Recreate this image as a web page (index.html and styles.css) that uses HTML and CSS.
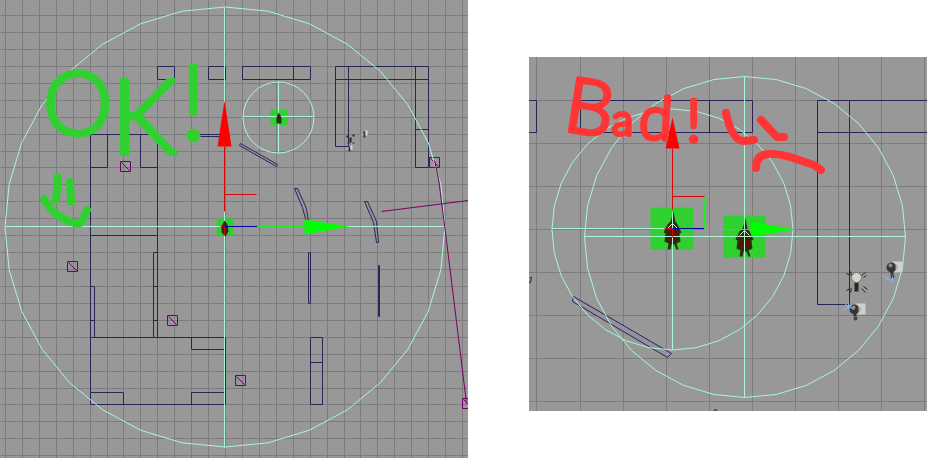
FILE: index.html
```
<!DOCTYPE html>
<html lang="en">
<head>
<meta charset="utf-8">
<title>Light radius comparison</title>
<link rel="stylesheet" href="styles.css">
</head>
<body>
<main class="compare">
<svg class="view" viewBox="0 0 468 458" role="img" aria-label="Viewport with correct radii">
  <defs>
    <polygon id="ring" points="0,-1000 195,-981 383,-924 556,-831 707,-707 831,-556 924,-383 981,-195 1000,0 981,195 924,383 831,556 707,707 556,831 383,924 195,981 0,1000 -195,981 -383,924 -556,831 -707,707 -831,556 -924,383 -981,195 -1000,0 -981,-195 -924,-383 -831,-556 -707,-707 -556,-831 -383,-924 -195,-981"/>
    <g id="node"><path d="M0 0h10v10h-10zM1 1L9 9"/></g>
    <g id="person">
      <path fill="#302b10" d="M1-20L-2-10-5-7-9 1-7 2-8 10-4 12-5 18-2 18-1 13 2 13 4 18 6 18 4 12 8 10 7 2 9 1 5-7 3-10z"/>
      <path fill="#541800" d="M-4-3h8l2 12h-12z"/>
      <path fill="none" stroke="#e0eebc" d="M-5-3L0-8 5-3"/>
    </g>
    <g id="spot">
      <path fill="#cfcfcf" d="M1-6h10v11H1z"/>
      <circle r="5" fill="#363639"/><circle cx="-1" cy="-2" r="2" fill="#8b8b8b"/>
      <path fill="#aaa" d="M4-4q5 4 0 7z"/>
      <path fill="#333" d="M-1 4h3v3h-3z"/><circle cx="1" cy="9" r="2" fill="#444"/>
    </g>
  </defs>
  <g transform="translate(.5 .5)">
    <path class="grid" d="M5 0v458M22 0v458M39 0v458M56 0v458M73 0v458M90 0v458M107 0v458M123 0v458M140 0v458M157 0v458M174 0v458M191 0v458M208 0v458M225 0v458M242 0v458M259 0v458M276 0v458M293 0v458M310 0v458M327 0v458M344 0v458M360 0v458M377 0v458M394 0v458M411 0v458M428 0v458M445 0v458M462 0v458"/>
    <path class="grid" d="M0 15h468M0 32h468M0 49h468M0 66h468M0 83h468M0 100h468M0 117h468M0 134h468M0 151h468M0 167h468M0 184h468M0 201h468M0 218h468M0 235h468M0 252h468M0 269h468M0 286h468M0 303h468M0 320h468M0 337h468M0 354h468M0 371h468M0 388h468M0 404h468M0 421h468M0 438h468M0 455h468"/>
    <path class="wall" d="M157 66h17v13h-17zM208 66h17v13h-17zM242 66h68v13h-68zM293 66v13M335 66h93v101h-13V66M335 66v80h13V66M335 79h93M415 129h13"/>
    <path class="wall" d="M90 134h67v203M90 134v270h135v-67H90M107 134v33H90M140 134v33h17M90 235h67M157 252h-4v85M153 286h4M153 320h4M90 286h4v51M90 320h4M191 337v12h34M191 404v-12h34M90 392h33v12M310 337h12v67h-12zM310 362h12M308 252h2v51h-2zM378 265h1v51h-1zM198 137v-3h27M200 136h25"/>
    <path class="wall slanted" d="M240 143L277 164 276 166 239 145zM294 188h3l9 20 2 14M294 188l8 19 4 15M364 201h3l9 20 2 21h-2l-3-20z"/>
    <g class="purple">
      <use href="#node" x="120" y="161"/><use href="#node" x="67" y="261"/><use href="#node" x="167" y="315"/><use href="#node" x="235" y="375"/><use href="#node" x="429" y="157"/><use href="#node" x="462" y="398"/>
    </g>
    <path fill="#30d030" d="M216 218h17v17h-17zM270 109h17v16h-17z"/>
    <use href="#ring" class="range" transform="translate(224.5 226.5) scale(.22)"/>
    <use href="#ring" class="range" transform="translate(278 117) scale(.0355)"/>
    <path class="range" d="M224 7v440M5 226h440M278 81v71M243 116h70"/>
    <path class="purple cable" d="M381 211L468 200M434 160L438 178 446 240 466 403"/>
    <path fill="#302b10" d="M224 220l3 4 1 7-3 5-4-4v-6zM278 112l3 5v6h-5v-6z"/>
    <path class="red" d="M224 146v65M224 194h32M220 226h4v9"/>
    <path class="blue" d="M224 226h33"/>
    <path class="green" d="M257 195v31h48"/>
    <path fill="#f00" d="M224 100l7 46h-14z"/>
    <path fill="#0f0" d="M304 219l45 7-45 8z"/>
    <g class="bulbs">
      <path stroke="#252525" d="M347 135v2M353 134v2M348 142v1M353 142v1M350 137v5"/>
      <path stroke="#9bc3e8" d="M361 134h5M346 148h5"/>
      <path stroke="#333" d="M364 131v6M349 146v5"/>
      <path stroke="#ddd" d="M366 130v5M351 145v4"/>
    </g>
  </g>
  <g class="marker ok">
    <path d="M58 177L56 200M70 182L71 202M44 199Q54 214 59 216Q74 225 80 223L83 219 87 210"/>
    <text><tspan class="size-o" x="43" y="135">O</tspan><tspan class="size-k" x="111" y="154">K</tspan><tspan class="size-k" x="180" y="140">!</tspan></text>
  </g>
</svg>
<svg class="view second" viewBox="529 57 398 354" role="img" aria-label="Viewport with misplaced radii">
  <g transform="translate(.5 .5)">
    <path class="grid" d="M536 56v356M580 56v356M623 56v356M666 56v356M709 56v356M752 56v356M795 56v356M838 56v356M881 56v356M924 56v356M528 100h400M528 143h400M528 186h400M528 229h400M528 272h400M528 315h400M528 358h400M528 401h400"/>
    <path class="wall" d="M528 100h8v32h-8M580 100h172v32h-172zM709 100v32M928 100H817v204h32V100M817 132h111"/>
    <path class="wall slanted" d="M573 296L671 353 667 357 572 301zM529 277h2l-1 5h-2M713 410l3-1 1 3"/>
    <path fill="#30d030" d="M650 207h43v42h-43zM723 215h42v42h-42z"/>
    <use href="#person" x="672" y="231"/><use href="#person" x="744" y="238"/>
    <use href="#ring" class="range" transform="translate(672 229) scale(.1205)"/>
    <use href="#ring" class="range" transform="translate(744.5 236.5) scale(.1605)"/>
    <path class="range" d="M672 212v137M552 228h120M744 76v321M584 236h321"/>
    <path class="red" d="M672 148v61M672 196h32M664 228h8v9"/>
    <path class="blue" d="M672 228h32"/>
    <path class="green" d="M704 197v32h48"/>
    <path fill="#f00" d="M672 117l7 31h-14z"/>
    <path fill="#0f0" d="M751 221l44 8-44 7z"/>
    <use href="#spot" x="891" y="267"/><use href="#spot" x="854" y="309"/>
    <g fill="none">
      <path stroke="#83b8ef" d="M882 275l9 6M885 281l3-5M892 276v5M844 303l9 6M843 309l8-4M848 302v8"/>
      <path stroke="#222" d="M846 273l4 2M850 271l1 4M861 275l4-3M863 277l3-2M846 290l4-2M850 292l1-4M861 288l4 4M863 286l4 3"/>
      <path fill="#282828" d="M854 282h4v9h-4z"/><circle cx="856" cy="277" r="5" fill="#d4d4ca" stroke="#777"/>
    </g>
  </g>
  <g class="marker bad">
    <path d="M726 113Q732 140 743 141L754 140M761 120L777 137 784 137M756 168Q756 155 768 154Q780 153 799 160L814 165 821 170"/>
    <text><tspan class="size-b" x="562" y="130" rotate="9">B</tspan><tspan class="size-a" x="612" y="135">a</tspan><tspan class="size-d" x="638" y="138" rotate="4">d</tspan><tspan class="size-d" x="686" y="142">!</tspan></text>
  </g>
</svg>
</main>
</body>
</html>
```
FILE: styles.css
```
body {
  margin: 0;
  background: #fff;
}

.compare {
  display: grid;
  grid-template-columns: 468fr 398fr;
  column-gap: 61px;
  align-items: start;
}

.view {
  display: block;
  width: 100%;
  height: auto;
  background: #989898;
}

.second {
  margin-top: 57px;
}

.grid,
.wall,
.range,
.purple,
.red,
.green,
.blue,
.bulbs {
  fill: none;
  stroke-width: 1px;
}

.grid {
  stroke: #7c7c7c;
}

.wall {
  stroke: #292657;
}

.slanted {
  fill: #96909f;
}

.range {
  stroke: #a8f8d5;
  vector-effect: non-scaling-stroke;
}

#ring {
  vector-effect: non-scaling-stroke;
}

.purple {
  stroke: #700070;
}

.cable {
  stroke: #780060;
}

.red {
  stroke: #d90808;
}

.green {
  stroke: #20ee20;
}

.blue {
  stroke: #0000a5;
}

.bulbs {
  stroke-width: 2px;
}

.marker path {
  fill: none;
  stroke-width: 8px;
}

.marker {
  stroke-linecap: round;
  stroke-linejoin: round;
}

.marker text {
  font-family: Lato, "Liberation Sans", sans-serif;
  font-weight: 300;
  stroke-width: 4px;
}

.ok {
  fill: #30d030;
  stroke: #30d030;
}

.bad {
  fill: #ff3535;
  stroke: #ff3535;
}

.size-o {
  font-size: 88px;
}

.size-k {
  font-size: 104px;
}

.size-b {
  font-size: 76px;
}

.size-a {
  font-size: 44px;
}

.size-d {
  font-size: 60px;
}
```
